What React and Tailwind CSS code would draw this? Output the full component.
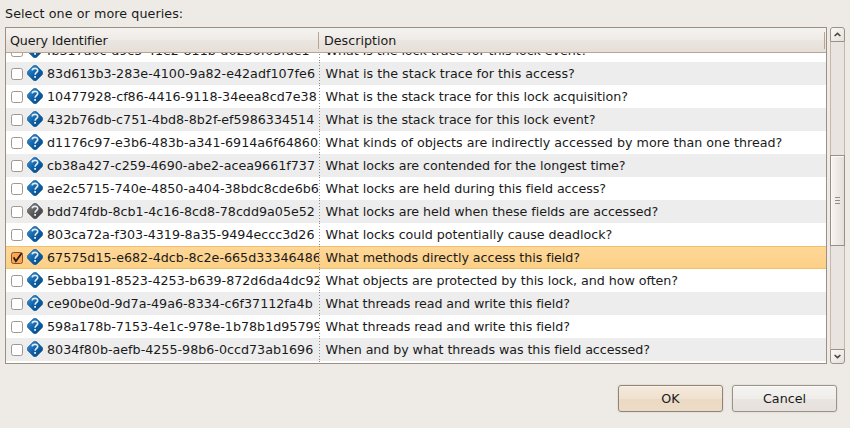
import React from "react";

const rows = [
  ["fb317a0c-d9c5-41e2-811b-d0236f03fde1", "What is the lock trace for this lock event?"],
  ["83d613b3-283e-4100-9a82-e42adf107fe6", "What is the stack trace for this access?"],
  ["10477928-cf86-4416-9118-34eea8cd7e38", "What is the stack trace for this lock acquisition?"],
  ["432b76db-c751-4bd8-8b2f-ef5986334514", "What is the stack trace for this lock event?"],
  ["d1176c97-e3b6-483b-a341-6914a6f64860", "What kinds of objects are indirectly accessed by more than one thread?"],
  ["cb38a427-c259-4690-abe2-acea9661f737", "What locks are contended for the longest time?"],
  ["ae2c5715-740e-4850-a404-38bdc8cde6b6", "What locks are held during this field access?"],
  ["bdd74fdb-8cb1-4c16-8cd8-78cdd9a05e52", "What locks are held when these fields are accessed?", "gray"],
  ["803ca72a-f303-4319-8a35-9494eccc3d26", "What locks could potentially cause deadlock?"],
  ["67575d15-e682-4dcb-8c2e-665d33346486", "What methods directly access this field?", "selected"],
  ["5ebba191-8523-4253-b639-872d6da4dc92", "What objects are protected by this lock, and how often?"],
  ["ce90be0d-9d7a-49a6-8334-c6f37112fa4b", "What threads read and write this field?"],
  ["598a178b-7153-4e1c-978e-1b78b1d95799", "What threads read and write this field?"],
  ["8034f80b-aefb-4255-98b6-0ccd73ab1696", "When and by what threads was this field accessed?"],
];

function QueryIcon({ gray }) {
  const id = gray ? "diamond-gray" : "diamond-blue";
  return (
    <svg className="mt-[3px] ml-1 h-4 w-4 shrink-0 self-start" viewBox="0 0 16 16">
      <defs>
        <linearGradient id={id} x1="0" y1="0" x2="1" y2="1">
          <stop offset="0" stopColor={gray ? "#8a8a8a" : "#4696d2"} />
          <stop offset="0.5" stopColor={gray ? "#5a5a5a" : "#0f62a8"} />
          <stop offset="1" stopColor={gray ? "#3a3a3a" : "#06457f"} />
        </linearGradient>
      </defs>
      <path
        d="M6.3.8Q8-.4 9.7.8L15.2 6.3Q16.4 8 15.2 9.7L9.7 15.2Q8 16.4 6.3 15.2L.8 9.7Q-.4 8 .8 6.3Z"
        fill={`url(#${id})`}
        stroke={gray ? "#505050" : "#0e5a98"}
        strokeWidth=".6"
      />
      <path d="M5.2 5.4C5.5 2.7 10.9 2.7 10.7 5.6C10.6 7.4 8.1 7.4 8.1 9.8" fill="none" stroke="#e3eef6" strokeWidth="1.6" />
      <rect x="7.2" y="11" width="1.8" height="1.8" fill="#e3eef6" />
    </svg>
  );
}

function Checkbox({ checked }) {
  return (
    <span
      className={`mt-1.5 flex h-3 w-3 shrink-0 items-center justify-center self-start rounded-[2.5px] border ${
        checked ? "border-[#8c4f24] bg-[#f9a65a]" : "border-[#a1968a] bg-white"
      }`}
    >
      {checked && (
        <svg className="h-3 w-3 shrink-0 overflow-visible" viewBox="0 0 12 12">
          <path d="M2.6 5.4L4.9 9.2L10.6 1.2" fill="none" stroke="#26180e" strokeWidth="1.8" />
        </svg>
      )}
    </span>
  );
}

function Row({ row, index }) {
  const [id, text, state] = row;
  const bg =
    state === "selected"
      ? "bg-linear-to-b from-[#ffd799] to-[#fbd085] shadow-[inset_0_1px_#f2c069,inset_0_-1px_#f2c069]"
      : index % 2
        ? "bg-[#ededed]"
        : "bg-white";
  const tracking =
    index === 1 || index === 4 ? "tracking-[0.005px]" : index > 10 ? "tracking-[-0.08px]" : "tracking-[-0.05px]";
  return (
    <div className={`flex h-[23px] shrink-0 ${bg}`}>
      <div className="flex w-[313px] items-center overflow-hidden pl-[5px]">
        <Checkbox checked={state === "selected"} />
        <QueryIcon gray={state === "gray"} />
        <span className="ml-1 whitespace-nowrap">{id}</span>
      </div>
      <div className="w-px bg-[repeating-linear-gradient(to_bottom,#8a8a8a_0_1px,transparent_1px_3px)]" />
      <span className={`pl-[5.6px] leading-[23px] whitespace-nowrap ${tracking}`}>{text}</span>
    </div>
  );
}

function Arrow({ down }) {
  return (
    <div
      className={`flex h-[15px] shrink-0 items-center justify-center border border-[#9b9287] bg-linear-to-br from-[#faf9f7] to-[#e6e0d9] ${
        down ? "rounded-b-[3px]" : "rounded-t-[3px]"
      }`}
    >
      <svg className="h-[5px] w-[7px]" viewBox="0 0 7 5">
        <path d={down ? "M.6 1L3.5 3.6L6.4 1" : "M.6 4L3.5 1.4L6.4 4"} fill="none" stroke="#4b4641" strokeWidth="1.6" />
      </svg>
    </div>
  );
}

export default function App() {
  return (
    <div className="h-[428px] w-[850px] overflow-hidden bg-[#eeebe6] font-['DejaVu_Sans',sans-serif] text-[12.7px] text-[#1a1a1a]">
      <div className="h-[27px] pl-[5px] leading-[27px] tracking-[0.08px]">Select one or more queries:</div>
      <div className="flex h-[337px] pl-[5px]">
        <div className="flex w-[822px] flex-col overflow-hidden border border-[#9d9083] bg-white">
          <div className="flex h-[25px] shrink-0 items-center border-b border-[#b9a597] bg-[linear-gradient(to_bottom,#f5f3f0,#efebe7_50%,#ebe6e1_51%,#e6dfd8)]">
            <span className="w-[312px] pt-px pl-1 tracking-[-0.14px]">Query Identifier</span>
            <span className="h-[17px] w-px bg-[#b9a597]" />
            <span className="flex-1 pt-px pl-[5px]">Description</span>
            <span className="mr-px h-[17px] w-px bg-[#b9a597]" />
          </div>
          <div className="flex min-h-0 flex-1 flex-col overflow-hidden">
            <div className="-mt-3.5 flex flex-col">
              {rows.map((row, i) => (
                <Row key={row[0]} row={row} index={i} />
              ))}
            </div>
            <div className="ml-[313px] h-0.5 w-px bg-[repeating-linear-gradient(to_bottom,#8a8a8a_0_1px,transparent_1px_3px)]" />
          </div>
        </div>
        <div className="ml-[3px] flex w-[15px] flex-col">
          <Arrow />
          <div className="h-[113px] border-x border-[#c5b8aa] bg-[#e9e4df]" />
          <div className="flex h-[91px] flex-col items-center justify-center gap-0.5 border border-[#979086] bg-linear-to-r from-[#f6f4f2] to-[#e5dfda] shadow-[inset_1px_1px_#fbfaf9]">
            <span className="h-px w-[5px] bg-[#958e86]" />
            <span className="h-px w-[5px] bg-[#958e86]" />
            <span className="h-px w-[5px] bg-[#958e86]" />
          </div>
          <div className="flex-1 border-x border-[#c5b8aa] bg-[#e9e4df]" />
          <Arrow down />
        </div>
      </div>
      <div className="flex justify-end gap-[9px] pt-[21px] pr-[13px]">
        <button className="h-[27px] w-[105px] rounded-[3px] border border-[#8f8577] bg-[linear-gradient(to_bottom,#f4e9dc,#f0e1d0_50%,#ebd9c4_51%,#ecdcc7)] shadow-[inset_0_1px_#faf3ea,0_0_1px_1px_#e3dfd9]">
          OK
        </button>
        <button className="h-[27px] w-[105px] rounded-[3px] border border-[#9a9389] bg-[linear-gradient(to_bottom,#f5f4f2,#f0edea_50%,#e9e5e0_51%,#e6e1dc)] shadow-[inset_0_1px_#fbfaf9,0_0_1px_1px_#e3dfd9]">
          Cancel
        </button>
      </div>
    </div>
  );
}
